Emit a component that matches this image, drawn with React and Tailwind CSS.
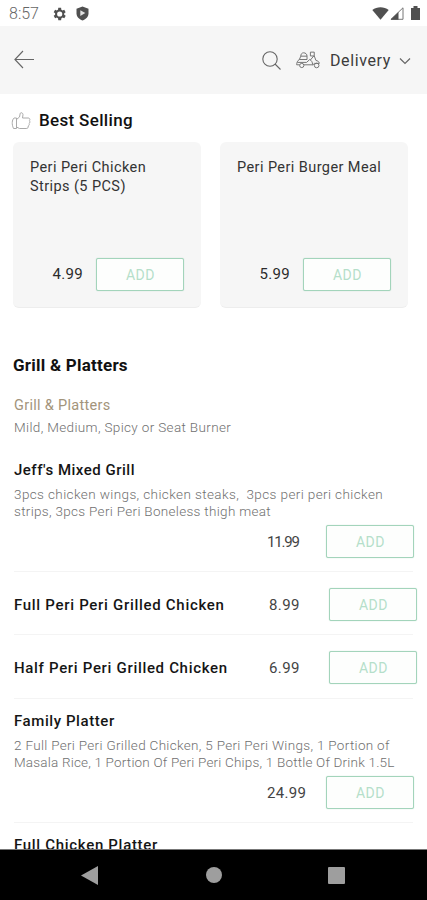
import React from "react";

const AddButton = ({ className = "" }) => (
  <button
    className={`h-[33px] w-[88px] shrink-0 rounded-[2px] border border-[#a3d4bb] bg-[#fdfefd] pt-px pl-px text-[14px] leading-[31px] tracking-[0.5px] text-[#b5dfca] shadow-[0_0_1px_#a9d6bf] ${className}`}
  >
    ADD
  </button>
);

const Card = ({ title, price }) => (
  <div className="flex h-[166px] w-[188px] shrink-0 flex-col justify-between rounded-[6px] border-b border-[#ededed] bg-[#f6f6f6] pt-[16px] pr-[17px] pb-[16px] pl-[17px]">
    <div className="text-[14.5px] leading-[19px] tracking-[0.42px] text-[#333]">{title}</div>
    <div className="flex items-center justify-end gap-[13px]">
      <span className="text-[15px] tracking-[0.3px] text-[#2b2b2b]">{price}</span>
      <AddButton />
    </div>
  </div>
);

const DetailedItem = ({ name, nameClass, lines, price, priceClass }) => (
  <section className="mx-[14px] border-b border-[#f4f4f4]">
    <h3 className={`h-[20px] whitespace-nowrap text-[15px] font-medium leading-[20px] text-[#151515] ${nameClass}`}>{name}</h3>
    <div className="mt-[6px] h-[35px] text-[13.5px] font-light leading-[17px] text-[#707070]">
      {lines.map((l) => (
        <div key={l.text} className={`whitespace-pre ${l.className}`}>{l.text}</div>
      ))}
    </div>
    <div className="mt-[4px] -mr-[2px] flex h-[46px] items-start">
      <span className={`ml-[253px] w-[59px] text-[15px] leading-[35px] text-[#444] ${priceClass}`}>{price}</span>
      <AddButton />
    </div>
  </section>
);

const SimpleItem = ({ name, nameClass, price, height }) => (
  <section className={`mx-[14px] border-b border-[#f4f4f4] ${height}`}>
    <div className="-mr-[5px] flex items-start pt-[16px]">
      <h3 className={`w-[255px] whitespace-nowrap text-[15px] font-medium leading-[34px] text-[#151515] ${nameClass}`}>{name}</h3>
      <span className="w-[60px] text-[15px] leading-[34px] tracking-[0.4px] text-[#444]">{price}</span>
      <AddButton />
    </div>
  </section>
);

const StatusBar = () => (
  <div className="flex h-[26px] shrink-0 items-center bg-white pl-[9px] pr-[7px] text-[#505050]">
    <span className="w-[43px] pt-[2px] text-[16px] font-light leading-[26px] text-[#666]">8:57</span>
    <svg width="14" height="14" viewBox="2 2 20 20" className="mt-[1px]" fill="#505050">
      <path d="M19.4 13c.04-.3.06-.7.06-1s-.02-.7-.06-1l2.1-1.65-2-3.46-2.5 1a7.3 7.3 0 0 0-1.7-1L15 3.2h-4l-.4 2.7a7.3 7.3 0 0 0-1.7 1l-2.5-1-2 3.46L6.5 11c-.04.3-.06.7-.06 1s.02.7.06 1l-2.1 1.65 2 3.46 2.5-1c.5.4 1.1.74 1.7 1l.4 2.7h4l.4-2.7a7.3 7.3 0 0 0 1.7-1l2.5 1 2-3.46zM13 15.700a3.700 3.700 0 1 1 0-7.400 3.700 3.700 0 0 1 0 7.400z" />
    </svg>
    <svg width="13" height="15" viewBox="0 0 13 15" className="ml-[10px]" fill="none">
      <path d="M6.500.5 12.500 2.700v4.600c0 3.500-2.500 6-6 7.200-3.500-1.200-6-3.700-6-7.200V2.700z" fill="#505050" />
      <path d="m4.300 4.200 5 2.900-5 2.900z" fill="#e2e2e2" />
    </svg>
    <svg width="17" height="13" viewBox="0 0 17 13" className="ml-auto">
      <path d="M.3 3C5-.7 12-.7 16.700 3L8.500 12.800z" fill="#505050" />
    </svg>
    <svg width="14" height="13" viewBox="0 0 14 13" className="ml-[1px]">
      <path d="M1 12.300 13 .8v11.500z" fill="#fff" stroke="#777" />
      <path d="M.5 12.800 8.500 5v7.800z" fill="#505050" />
    </svg>
    <svg width="9" height="14" viewBox="0 0 9 14" className="ml-[7px]">
      <path d="M0 2h2.500V0h4v2H9v12H0z" fill="#505050" />
    </svg>
  </div>
);

const Header = () => (
  <header className="flex h-[68px] shrink-0 items-center bg-[#f6f6f6] pl-[14px] pr-[16px]">
    <svg width="21" height="19" viewBox="0 0 21 19" fill="none" stroke="#666" strokeWidth="1.100" className="-mt-[1px]">
      <path d="M20 9.500H1M9 1 .9 9.500 9 18" />
    </svg>
    <svg width="19" height="19" viewBox="0 0 19 19" fill="none" stroke="#666" strokeWidth="1.100" className="ml-auto">
      <circle cx="8" cy="8" r="7.200" />
      <path d="m13 13 5.500 5.500" />
    </svg>
    <svg width="24" height="18" viewBox="0 0 25 18" fill="none" stroke="#707070" strokeWidth="1" className="mr-[10px] ml-[15px]">
      <path d="M3.500 8.500h8V5C11.500 3 10 1.500 8 1.500S5 3 5 5zM5 5h6.500" />
      <path d="M3.500 8.500C1.500 9.500.7 12 .7 14h3m4.600 0h9c0-3-1.300-4.500-3-5.500L11 11.500H1.500" />
      <circle cx="6" cy="14.700" r="2.200" />
      <circle cx="21.500" cy="14.700" r="2.400" />
      <path d="M15 .8h4v4h-4zM19 4.800l1.800 4.700c2 .3 3.200 1.300 3.500 3h-5l-2 1.800M18.500 4.800 15 9" />
    </svg>
    <span className="w-[69px] pt-[2px] text-[16px] leading-[20px] tracking-[0.600px] text-[#3c3c3c]">Delivery</span>
    <svg width="12" height="8" viewBox="0 0 12 8" fill="none" stroke="#666" strokeWidth="1.200" className="mt-[2px]">
      <path d="m1 1.500 5 5 5-5" />
    </svg>
  </header>
);

const NavBar = () => (
  <nav className="flex h-[51px] shrink-0 items-center border-t border-[#777] bg-black pl-[81px]">
    <svg width="17" height="19" viewBox="0 0 17 19" fill="#9e9e9e"><path d="M17 0v19L0 9.500z" /></svg>
    <div className="ml-[108px] size-[16px] rounded-full bg-[#9e9e9e]" />
    <div className="ml-[106px] size-[17px] rounded-[1px] bg-[#9e9e9e]" />
  </nav>
);

export default function App() {
  return (
    <div className="flex h-[900px] w-[427px] flex-col overflow-hidden bg-white font-['Roboto',sans-serif]">
      <StatusBar />
      <Header />
      <main className="min-h-0 flex-1 overflow-hidden">
        <div className="flex h-[48px] items-center pt-[5px] pl-[11px]">
          <svg width="20" height="18" viewBox="0 0 20 18" fill="none" stroke="#aaa" strokeWidth="1">
            <path d="M5.500 7.500 8.500 5l.7-3.500c.2-1.300 2.800-1 2.800 1.200L11.500 6H17c2.500 0 2 2.500 1.300 2.800 1 .8.600 2.200-.3 2.700.6.900.2 2-.8 2.500.3 1.500-.4 2.500-2 2.500H8.500l-3-1.500" />
            <path d="M5.500 6H3C1 8 .5 12 2.500 16.500h3z" />
          </svg>
          <h2 className="ml-[8px] text-[17px] font-medium tracking-[0.330px] text-[#111]">Best Selling</h2>
        </div>
        <div className="flex gap-[19px] pl-[13px]">
          <Card title={<>Peri Peri Chicken<br />Strips (5 PCS)</>} price="4.99" />
          <Card title="Peri Peri Burger Meal" price="5.99" />
        </div>
        <h2 className="mt-[47px] ml-[13px] h-[20px] text-[17px] font-bold leading-[20px] tracking-[0.230px] text-[#111]">Grill &amp; Platters</h2>
        <div className="mt-[20px] ml-[14px] h-[20px] text-[14.500px] leading-[22px] tracking-[0.300px] text-[#a3947b]">Grill &amp; Platters</div>
        <div className="mt-[3px] mb-[22px] ml-[14px] h-[20px] text-[13.500px] font-light leading-[19px] tracking-[0.350px] text-[#707070]">Mild, Medium, Spicy or Seat Burner</div>
        <DetailedItem
          name="Jeff's Mixed Grill"
          nameClass="tracking-[0.500px]"
          price="11.99"
          priceClass="tracking-[-1.200px]"
          lines={[
            { text: "3pcs chicken wings, chicken steaks,  3pcs peri peri chicken", className: "tracking-[0.390px]" },
            { text: "strips, 3pcs Peri Peri Boneless thigh meat", className: "tracking-[0.310px]" },
          ]}
        />
        <SimpleItem name="Full Peri Peri Grilled Chicken" nameClass="tracking-[0.700px]" price="8.99" height="h-[63px]" />
        <SimpleItem name="Half Peri Peri Grilled Chicken" nameClass="tracking-[0.680px]" price="6.99" height="h-[64px]" />
        <div className="h-[12px]" />
        <DetailedItem
          name="Family Platter"
          nameClass="tracking-[0.580px]"
          price="24.99"
          priceClass="tracking-[0.300px]"
          lines={[
            { text: "2 Full Peri Peri Grilled Chicken, 5 Peri Peri Wings, 1 Portion of", className: "tracking-[0.310px]" },
            { text: "Masala Rice, 1 Portion Of Peri Peri Chips, 1 Bottle Of Drink 1.5L", className: "tracking-[0.190px]" },
          ]}
        />
        <h3 className="mt-[12px] ml-[14px] text-[15px] font-medium leading-[20px] tracking-[0.690px] text-[#151515]">Full Chicken Platter</h3>
      </main>
      <NavBar />
    </div>
  );
}
